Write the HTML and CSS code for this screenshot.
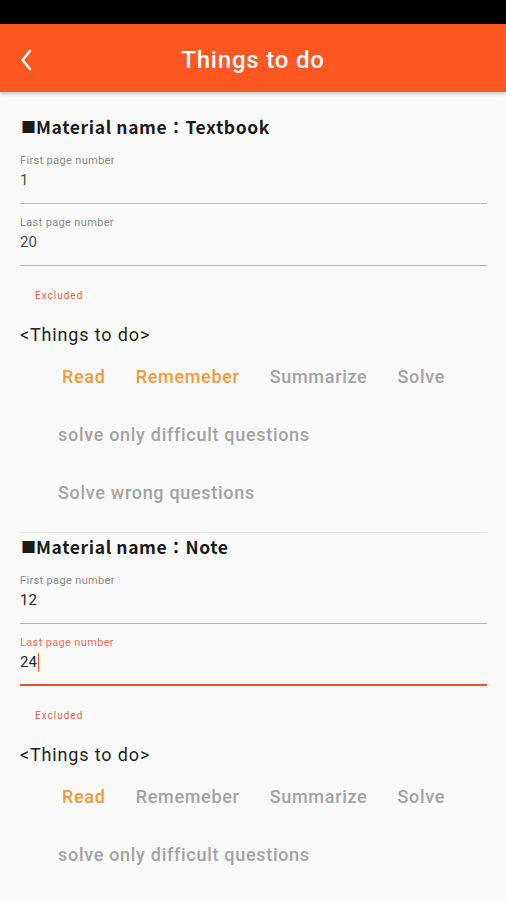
FILE: index.html
```html
<!DOCTYPE html>
<html>
<head>
<meta charset="utf-8">
<link rel="stylesheet" href="styles.css">
</head>
<body>
<div class="status"></div>
<header class="appbar">
  <svg class="back" width="16" height="24" viewBox="0 0 16 24"><path d="M12 3 L4.5 12 L12 21" fill="none" stroke="#fff" stroke-width="2.6" stroke-linecap="round" stroke-linejoin="round"/></svg>
  <h1 class="title">Things to do</h1>
</header>
<main class="content">
  <section class="material">
    <h2 class="mat-title"><span class="sq">■</span>Material name：Textbook</h2>
    <div class="field">
      <div class="label">First page number</div>
      <div class="value">1</div>
    </div>
    <div class="field second">
      <div class="label">Last page number</div>
      <div class="value">20</div>
    </div>
    <div class="excluded">Excluded</div>
    <div class="todo-head">&lt;Things to do&gt;</div>
    <div class="options">
      <span class="opt on">Read</span>
      <span class="opt on">Rememeber</span>
      <span class="opt">Summarize</span>
      <span class="opt">Solve</span>
      <span class="opt wide">solve only difficult questions</span>
      <span class="opt wide">Solve wrong questions</span>
    </div>
  </section>
  <section class="material divided">
    <h2 class="mat-title"><span class="sq">■</span>Material name：Note</h2>
    <div class="field">
      <div class="label">First page number</div>
      <div class="value dark">12</div>
    </div>
    <div class="field second focus">
      <div class="label">Last page number</div>
      <div class="value dark">24<span class="caret"></span></div>
    </div>
    <div class="excluded">Excluded</div>
    <div class="todo-head">&lt;Things to do&gt;</div>
    <div class="options">
      <span class="opt on">Read</span>
      <span class="opt">Rememeber</span>
      <span class="opt">Summarize</span>
      <span class="opt">Solve</span>
      <span class="opt wide">solve only difficult questions</span>
    </div>
  </section>
</main>
</body>
</html>
```
FILE: styles.css
```css
* { box-sizing: border-box; }
html, body { margin: 0; padding: 0; }
body {
  width: 506px;
  height: 900px;
  overflow: hidden;
  background: #fafafa;
  font-family: Roboto, "Noto Sans", sans-serif;
  color: #212121;
}
.status { height: 24px; background: #000; }
.appbar {
  height: 68px;
  background: #ff5722;
  display: flex;
  align-items: center;
  justify-content: center;
  position: relative;
  box-shadow: 0 2px 4px rgba(0,0,0,0.22);
  z-index: 1;
}
.back { position: absolute; left: 18px; top: 24px; }
.title {
  margin: 0;
  padding-top: 4px;
  color: #fff;
  font-size: 24px;
  font-weight: 500;
  letter-spacing: 0.8px;
}
.content { padding: 0 19px 0 20px; }
.material { padding-top: 23px; }
.material.divided { border-top: 1px solid #e6e6e6; padding-top: 2px; }
.mat-title {
  margin: 0;
  font-family: "Noto Sans CJK JP", "Noto Sans", sans-serif;
  font-size: 17.5px;
  font-weight: 700;
  line-height: 24px;
  color: #1a1a1a;
  letter-spacing: 0.6px;
  display: flex;
  align-items: center;
}
.sq { font-size: 15px; letter-spacing: 0; margin-left: 1px; }
.field {
  padding-top: 15px;
  padding-bottom: 13px;
  border-bottom: 1px solid #b5b5b5;
}
.field.second { padding-top: 12px; }
.label {
  font-size: 11px;
  line-height: 13px;
  color: #8a8a8a;
  letter-spacing: 0.35px;
}
.value {
  margin-top: 3px;
  font-size: 15px;
  line-height: 20px;
  color: #4a4a4a;
  display: flex;
  align-items: center;
}
.value.dark { color: #262626; }
.field.focus { border-bottom: 2px solid #f4511e; padding-bottom: 12px; }
.field.focus .label { color: #f26b5b; }
.caret { display: inline-block; width: 1px; height: 19px; background: #f4511e; margin-left: 1px; }
.excluded {
  margin-top: 24px;
  padding-left: 15px;
  font-size: 10px;
  line-height: 12px;
  color: #ea5a4c;
  letter-spacing: 1px;
}
.todo-head {
  margin-top: 22px;
  font-size: 18px;
  line-height: 22px;
  color: #222;
  letter-spacing: 0.85px;
}
.options {
  display: flex;
  flex-wrap: wrap;
  padding-left: 27px;
  margin-top: 1px;
  padding-bottom: 11px;
}
.opt {
  height: 58px;
  display: flex;
  align-items: center;
  padding: 0 15px;
  font-size: 18px;
  font-weight: 500;
  letter-spacing: 0.7px;
  color: #a3a3a3;
}
.opt.on { color: #f5993a; }
.opt.wide { padding-left: 11px; }
```
